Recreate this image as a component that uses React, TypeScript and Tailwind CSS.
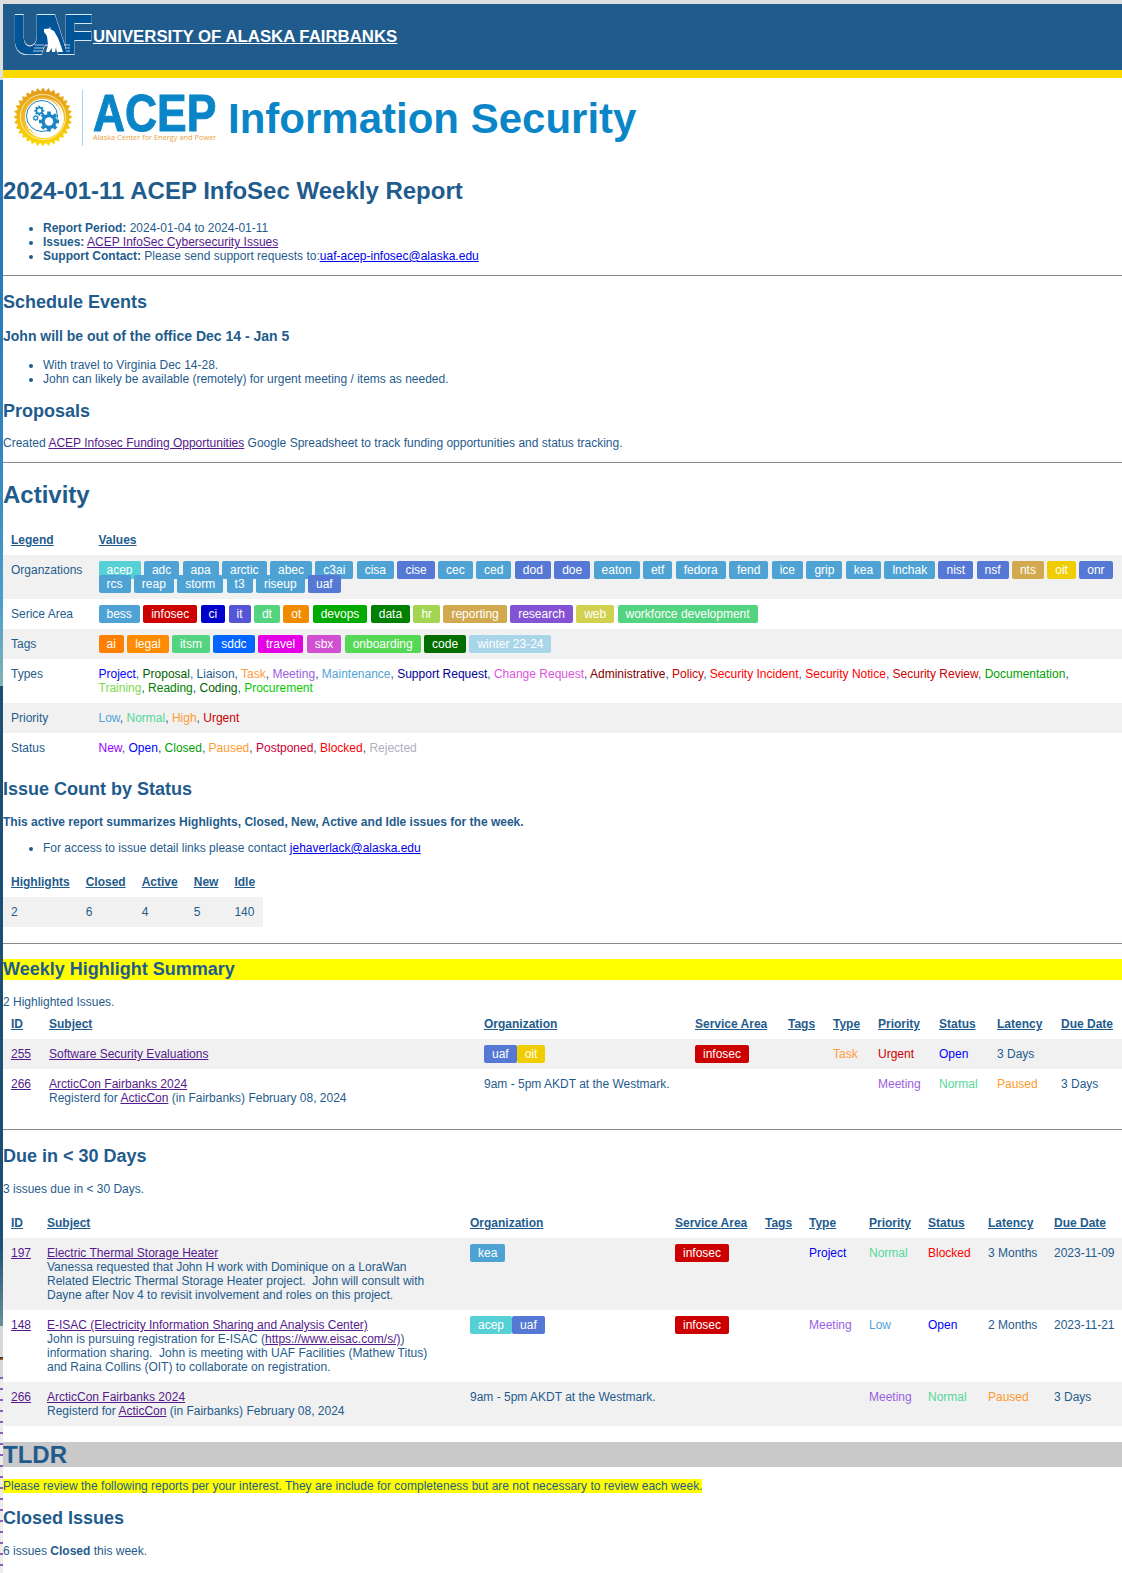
import type { ReactNode } from "react";

type Tag = [string, string];

const BLUE = "bg-[#4fa3d4]";
const INDIGO = "bg-[#5478d4]";

const orgs: Tag[] = [
  ["acep", "bg-[#55d0d5]"], ["adc", BLUE], ["apa", BLUE], ["arctic", BLUE], ["abec", BLUE], ["c3ai", BLUE],
  ["cisa", BLUE], ["cise", INDIGO], ["cec", BLUE], ["ced", BLUE], ["dod", INDIGO], ["doe", INDIGO],
  ["eaton", BLUE], ["etf", BLUE], ["fedora", BLUE], ["fend", BLUE], ["ice", BLUE], ["grip", BLUE],
  ["kea", BLUE], ["lnchak", BLUE], ["nist", INDIGO], ["nsf", INDIGO], ["nts", "bg-[#d1a94f]"],
  ["oit", "bg-[#f0cd00]"], ["onr", INDIGO], ["rcs", BLUE], ["reap", BLUE], ["storm", BLUE], ["t3", BLUE],
  ["riseup", BLUE], ["uaf", INDIGO],
];

const areas: Tag[] = [
  ["bess", BLUE], ["infosec", "bg-[#cc0000]"], ["ci", "bg-[#0000cc]"], ["it", "bg-[#5555d5]"],
  ["dt", "bg-[#55d480]"], ["ot", "bg-[#f08c00]"], ["devops", "bg-[#00aa00]"], ["data", "bg-[#008000]"],
  ["hr", "bg-[#a3d550]"], ["reporting", "bg-[#d1a94f]"], ["research", "bg-[#8453d4]"], ["web", "bg-[#d1d14f]"],
  ["workforce development", "bg-[#53d480]"],
];

const tags: Tag[] = [
  ["ai", "bg-[#ff8000]"], ["legal", "bg-[#ff8c00]"], ["itsm", "bg-[#53d480]"], ["sddc", "bg-[#0066ff]"],
  ["travel", "bg-[#e600e6]"], ["sbx", "bg-[#d14fd1]"], ["onboarding", "bg-[#55d955]"], ["code", "bg-[#006f00]"],
  ["winter 23-24", "bg-[#a9d5e8]"],
];

const types: Tag[] = [
  ["Project", "text-[#0000ff]"], ["Proposal", "text-[#006400]"], ["Liaison", ""], ["Task", "text-[#ff9a3d]"],
  ["Meeting", "text-[#9a5fe0]"], ["Maintenance", "text-[#51a3d6]"], ["Support Request", "text-[#000099]"],
  ["Change Request", "text-[#dd55dd]"], ["Administrative", "text-[#800000]"], ["Policy", "text-[#cc0000]"],
  ["Security Incident", "text-[#ff0000]"], ["Security Notice", "text-[#ff0000]"], ["Security Review", "text-[#cc0000]"],
  ["Documentation", "text-[#00a000]"], ["Training", "text-[#7fd94f]"], ["Reading", "text-[#008000]"],
  ["Coding", "text-[#006000]"], ["Procurement", "text-[#00cc00]"],
];

const priorities: Tag[] = [
  ["Low", "text-[#51a3d6]"], ["Normal", "text-[#55d999]"], ["High", "text-[#ff9a2e]"], ["Urgent", "text-[#cc0000]"],
];

const statuses: Tag[] = [
  ["New", "text-[#9900ff]"], ["Open", "text-[#0000ff]"], ["Closed", "text-[#00a000]"], ["Paused", "text-[#ff9a2e]"],
  ["Postponed", "text-[#cc0033]"], ["Blocked", "text-[#ff0000]"], ["Rejected", "text-[#b0b0c0]"],
];

const colorOf = (list: Tag[], name: string) => list.find((t) => t[0] === name)?.[1] ?? "";

function Badge({ name, list }: { name: string; list: Tag[] }) {
  return <span className={`rounded-[2px] px-2 py-[2px] text-white ${colorOf(list, name)}`}>{name}</span>;
}

function BadgeRow({ list }: { list: Tag[] }) {
  return (
    <>
      {list.map((t) => (
        <span key={t[0]}>
          <Badge name={t[0]} list={list} />{" "}
        </span>
      ))}
    </>
  );
}

function CommaList({ list }: { list: Tag[] }) {
  return (
    <>
      {list.map((t, i) => (
        <span key={t[0]}>
          <span className={t[1]}>{t[0]}</span>
          {i < list.length - 1 ? ", " : ""}
        </span>
      ))}
    </>
  );
}

function Visited({ children }: { children: ReactNode }) {
  return <a className="text-[#551a8b] underline">{children}</a>;
}

function Mail({ children }: { children: ReactNode }) {
  return <a className="text-[#0000ee] underline">{children}</a>;
}

function Rule({ className }: { className: string }) {
  return <hr className={`border-0 h-px bg-[#8c8c8c] ${className}`} />;
}

function H2({ children, className }: { children: ReactNode; className: string }) {
  return <h2 className={`text-[18px] leading-[21px] font-bold ${className}`}>{children}</h2>;
}

function Bullets({ children, className }: { children: ReactNode; className: string }) {
  return <ul className={`list-disc pl-[40px] ${className}`}>{children}</ul>;
}

function Th({ children }: { children?: ReactNode }) {
  return <th className="p-2 text-left font-bold underline align-top">{children}</th>;
}

function Td({ children }: { children?: ReactNode }) {
  return <td className="p-2 align-top whitespace-nowrap">{children}</td>;
}

function SubjectTd({ children }: { children: ReactNode }) {
  return (
    <td className="p-2 align-top">
      <div className="max-w-[395px]">{children}</div>
    </td>
  );
}

function LegendRow({ label, shaded, children }: { label: string; shaded?: boolean; children: ReactNode }) {
  return (
    <tr className={shaded ? "bg-[#f1f1f1]" : ""}>
      <td className="p-2 align-top">{label}</td>
      <td className="p-2 align-top">{children}</td>
    </tr>
  );
}

function Gear({ cx, cy, r }: { cx: number; cy: number; r: number }) {
  const teeth = [0, 45, 90, 135];
  return (
    <g>
      {teeth.map((d) => (
        <rect
          key={d}
          x={cx - r * 0.18}
          y={cy - r}
          width={r * 0.36}
          height={r * 2}
          fill="#1a86c4"
          transform={`rotate(${d} ${cx} ${cy})`}
        />
      ))}
      <circle cx={cx} cy={cy} r={r * 0.76} fill="#1a86c4" />
      <circle cx={cx} cy={cy} r={r * 0.42} fill="#ffffff" />
    </g>
  );
}

function Seal() {
  const points: string[] = [];
  for (let i = 0; i < 64; i++) {
    const r = i % 2 === 0 ? 29.5 : 26;
    const a = (i / 64) * Math.PI * 2;
    points.push(`${(30 + r * Math.cos(a)).toFixed(2)},${(30 + r * Math.sin(a)).toFixed(2)}`);
  }
  return (
    <svg width="60" height="60" viewBox="0 0 60 60" className="shrink-0">
      <defs>
        <linearGradient id="gold" x1="0" y1="0" x2="0" y2="1">
          <stop offset="0" stopColor="#e39a1e" />
          <stop offset="1" stopColor="#fbd900" />
        </linearGradient>
      </defs>
      <polygon points={points.join(" ")} fill="url(#gold)" />
      <circle cx="30" cy="30" r="22.5" fill="none" stroke="#ffffff" strokeWidth="0.7" />
      <circle cx="31" cy="31" r="20" fill="#ffffff" />
      <circle cx="29" cy="29" r="19" fill="#f0b93a" />
      <circle cx="30" cy="30" r="18" fill="#ffffff" />
      <circle cx="29" cy="29" r="15.5" fill="none" stroke="#1a86c4" strokeWidth="1" />
      <circle cx="29" cy="29" r="14" fill="#ffffff" />
      <Gear cx={36} cy={34.5} r={10} />
      <Gear cx={26.3} cy={23.7} r={5} />
      <Gear cx={22.7} cy={31} r={3} />
    </svg>
  );
}

function UafLogo() {
  return (
    <svg width="80" height="41" viewBox="0 0 80 41" className="shrink-0">
      <defs>
        <filter id="uafOutline" x="-5%" y="-5%" width="110%" height="110%">
          <feMorphology in="SourceAlpha" operator="dilate" radius="1.5" result="outer" />
          <feFlood floodColor="#d8e6f0" />
          <feComposite in2="outer" operator="in" result="outline" />
          <feMorphology in="SourceGraphic" operator="dilate" radius="0.8" result="thick" />
          <feMerge>
            <feMergeNode in="outline" />
            <feMergeNode in="thick" />
          </feMerge>
        </filter>
      </defs>
      <g transform="scale(0.9 1)">
        <text
          x="0 22 56"
          y="39"
          fontFamily="Liberation Sans, sans-serif"
          fontWeight="700"
          fontSize="53"
          fill="#055499"
          filter="url(#uafOutline)"
        >
          UAF
        </text>
      </g>
      <path
        d="M31 15l5-.5 5 2.500 4 7 3 8 2 6h-6l-1-5-1 5h-3v-4l-3 4h-3l2-7-1-9-3-4z"
        fill="#ffffff"
      />
      <path d="M22 31h9M21 34h10M20 37h10M51 31h6M52 34h5M53 37h4" stroke="#ffffff" strokeWidth="0.7" />
    </svg>
  );
}

function IssueHead() {
  return (
    <thead>
      <tr>
        <Th>ID</Th><Th>Subject</Th><Th>Organization</Th><Th>Service Area</Th><Th>Tags</Th>
        <Th>Type</Th><Th>Priority</Th><Th>Status</Th><Th>Latency</Th><Th>Due Date</Th>
      </tr>
    </thead>
  );
}

function ArcticRow({ shaded }: { shaded?: boolean }) {
  return (
    <tr className={shaded ? "bg-[#f1f1f1]" : ""}>
      <Td><Visited>266</Visited></Td>
      <SubjectTd>
        <Visited>ArcticCon Fairbanks 2024</Visited>
        <br />
        Registerd for <Visited>ActicCon</Visited> (in Fairbanks) February 08, 2024
      </SubjectTd>
      <Td>9am - 5pm AKDT at the Westmark.</Td>
      <Td />
      <Td />
      <Td />
      <Td><span className={colorOf(types, "Meeting")}>Meeting</span></Td>
      <Td><span className={colorOf(priorities, "Normal")}>Normal</span></Td>
      <Td><span className={colorOf(statuses, "Paused")}>Paused</span></Td>
      <Td>3 Days</Td>
    </tr>
  );
}

export default function App() {
  return (
    <div className="w-[1122px] h-[1573px] overflow-hidden flex flex-col bg-white font-['Liberation_Sans',Arial,sans-serif] text-[12px] leading-[14px] text-[#1f5c8d]">
      <div className="h-[4px] shrink-0 bg-[#dedede]" />
      <div className="flex flex-1 min-h-0">
        <div className="w-[3px] shrink-0 flex flex-col">
          <div className="h-[76px] bg-[#dedede]" />
          <div className="h-[606px] bg-[linear-gradient(180deg,#1b6fb5_0%,#2f86c0_60%,#4a9cc9_85%,#7fb5b8_100%)]" />
          <div className="h-[558px] bg-[#1b4f73]" />
          <div className="h-[82px] bg-[linear-gradient(180deg,#1b4f73_0%,#6a8f9a_100%)]" />
          <div className="h-[51px] bg-[linear-gradient(180deg,#d5dad5_0px,#d5dad5_31px,#222222_31px,#c86a2a_34px,#d5dad5_34px)]" />
          <div className="flex-1 bg-[repeating-linear-gradient(180deg,#8a5cc0_0px,#8a5cc0_2px,#ececec_2px,#ececec_11px)]" />
        </div>

        <div className="w-[1119px]">
          <header className="h-[74px] bg-[#1f5c8d] border-b-[8px] border-[#fad900] flex items-start pl-[10px] pt-[10px]">
            <UafLogo />
            <a className="text-white underline font-bold text-[16.8px] leading-[19px] mt-[13px]">UNIVERSITY OF ALASKA FAIRBANKS</a>
          </header>

          <div className="h-[83px] flex items-start pl-[10px] pt-[9px]">
            <Seal />
            <div className="w-px h-[56px] bg-[#a9d5ec] ml-[9px] mt-[3px]" />
            <div className="ml-[10px] flex flex-col w-[125px] shrink-0">
              <span className="text-[51px] leading-[52px] font-bold text-[#0a86c8] mt-[1px] origin-left scale-x-[0.87] [-webkit-text-stroke:1px_#0a86c8]">ACEP</span>
              <span className="text-[7.4px] leading-[9px] text-[#e8a33d] font-['Open_Sans',sans-serif] whitespace-nowrap -mt-[7px]">Alaska Center for Energy and Power</span>
            </div>
            <h1 className="ml-[10px] text-[42px] leading-[48px] font-bold text-[#0a86c8] whitespace-nowrap mt-[8px]">Information Security</h1>
          </div>

          <h1 className="mt-[16px] text-[24px] leading-[27px] font-bold">2024-01-11 ACEP InfoSec Weekly Report</h1>
          <Bullets className="mt-[17px]">
            <li><b>Report Period:</b> 2024-01-04 to 2024-01-11</li>
            <li><b>Issues:</b> <Visited>ACEP InfoSec Cybersecurity Issues</Visited></li>
            <li><b>Support Contact:</b> Please send support requests to:<Mail>uaf-acep-infosec@alaska.edu</Mail></li>
          </Bullets>
          <Rule className="mt-[12px]" />

          <H2 className="mt-[16px]">Schedule Events</H2>
          <h3 className="mt-[15px] text-[14px] leading-[16px] font-bold">John will be out of the office Dec 14 - Jan 5</h3>
          <Bullets className="mt-[14px]">
            <li>With travel to Virginia Dec 14-28.</li>
            <li>John can likely be available (remotely) for urgent meeting / items as needed.</li>
          </Bullets>
          <H2 className="mt-[15px]">Proposals</H2>
          <p className="mt-[14px]">Created <Visited>ACEP Infosec Funding Opportunities</Visited> Google Spreadsheet to track funding opportunities and status tracking.</p>
          <Rule className="mt-[12px]" />

          <h1 className="mt-[18px] text-[24px] leading-[27px] font-bold">Activity</h1>
          <table className="mt-[17px] w-full border-collapse table-fixed">
            <colgroup>
              <col className="w-[87.5px]" />
              <col />
            </colgroup>
            <thead>
              <tr>
                <Th>Legend</Th>
                <Th>Values</Th>
              </tr>
            </thead>
            <tbody>
              <LegendRow label="Organzations" shaded><BadgeRow list={orgs} /></LegendRow>
              <LegendRow label="Serice Area"><BadgeRow list={areas} /></LegendRow>
              <LegendRow label="Tags" shaded><BadgeRow list={tags} /></LegendRow>
              <LegendRow label="Types"><CommaList list={types} /></LegendRow>
              <LegendRow label="Priority" shaded><CommaList list={priorities} /></LegendRow>
              <LegendRow label="Status"><CommaList list={statuses} /></LegendRow>
            </tbody>
          </table>

          <H2 className="mt-[16px]">Issue Count by Status</H2>
          <p className="mt-[15px] font-bold">This active report summarizes Highlights, Closed, New, Active and Idle issues for the week.</p>
          <Bullets className="mt-[12px]">
            <li>For access to issue detail links please contact <Mail>jehaverlack@alaska.edu</Mail></li>
          </Bullets>
          <table className="mt-[12px] border-collapse">
            <thead>
              <tr><Th>Highlights</Th><Th>Closed</Th><Th>Active</Th><Th>New</Th><Th>Idle</Th></tr>
            </thead>
            <tbody>
              <tr className="bg-[#f1f1f1]"><Td>2</Td><Td>6</Td><Td>4</Td><Td>5</Td><Td>140</Td></tr>
            </tbody>
          </table>
          <Rule className="mt-[16px]" />

          <H2 className="mt-[15px] bg-[#ffff00]">Weekly Highlight Summary</H2>
          <p className="mt-[15px]">2 Highlighted Issues.</p>
          <table className="w-full border-collapse table-fixed">
            <colgroup>
              <col className="w-[38px]" />
              <col className="w-[435px]" />
              <col className="w-[211px]" />
              <col className="w-[93px]" />
              <col className="w-[45px]" />
              <col className="w-[45px]" />
              <col className="w-[61px]" />
              <col className="w-[58px]" />
              <col className="w-[64px]" />
              <col />
            </colgroup>
            <IssueHead />
            <tbody>
              <tr className="bg-[#f1f1f1]">
                <Td><Visited>255</Visited></Td>
                <SubjectTd><Visited>Software Security Evaluations</Visited></SubjectTd>
                <Td><Badge name="uaf" list={orgs} /><Badge name="oit" list={orgs} /></Td>
                <Td><Badge name="infosec" list={areas} /></Td>
                <Td />
                <Td><span className={colorOf(types, "Task")}>Task</span></Td>
                <Td><span className={colorOf(priorities, "Urgent")}>Urgent</span></Td>
                <Td><span className={colorOf(statuses, "Open")}>Open</span></Td>
                <Td>3 Days</Td>
                <Td />
              </tr>
              <ArcticRow />
            </tbody>
          </table>
          <Rule className="mt-[16px]" />

          <H2 className="mt-[16px]">Due in &lt; 30 Days</H2>
          <p className="mt-[15px]">3 issues due in &lt; 30 Days.</p>
          <table className="mt-[12px] w-full border-collapse table-fixed">
            <colgroup>
              <col className="w-[36px]" />
              <col className="w-[423px]" />
              <col className="w-[205px]" />
              <col className="w-[90px]" />
              <col className="w-[44px]" />
              <col className="w-[60px]" />
              <col className="w-[59px]" />
              <col className="w-[60px]" />
              <col className="w-[66px]" />
              <col />
            </colgroup>
            <IssueHead />
            <tbody>
              <tr className="bg-[#f1f1f1]">
                <Td><Visited>197</Visited></Td>
                <SubjectTd>
                  <Visited>Electric Thermal Storage Heater</Visited>
                  <br />
                  Vanessa requested that John H work with Dominique on a LoraWan Related Electric Thermal Storage Heater project.&nbsp; John will consult with Dayne after Nov 4 to revisit involvement and roles on this project.
                </SubjectTd>
                <Td><Badge name="kea" list={orgs} /></Td>
                <Td><Badge name="infosec" list={areas} /></Td>
                <Td />
                <Td><span className={colorOf(types, "Project")}>Project</span></Td>
                <Td><span className={colorOf(priorities, "Normal")}>Normal</span></Td>
                <Td><span className={colorOf(statuses, "Blocked")}>Blocked</span></Td>
                <Td>3 Months</Td>
                <Td>2023-11-09</Td>
              </tr>
              <tr>
                <Td><Visited>148</Visited></Td>
                <SubjectTd>
                  <Visited>E-ISAC (Electricity Information Sharing and Analysis Center)</Visited>
                  <br />
                  John is pursuing registration for E-ISAC (<Visited>https://www.eisac.com/s/)</Visited>) information sharing.&nbsp; John is meeting with UAF Facilities (Mathew Titus) and Raina Collins (OIT) to collaborate on registration.
                </SubjectTd>
                <Td><Badge name="acep" list={orgs} /><Badge name="uaf" list={orgs} /></Td>
                <Td><Badge name="infosec" list={areas} /></Td>
                <Td />
                <Td><span className={colorOf(types, "Meeting")}>Meeting</span></Td>
                <Td><span className={colorOf(priorities, "Low")}>Low</span></Td>
                <Td><span className={colorOf(statuses, "Open")}>Open</span></Td>
                <Td>2 Months</Td>
                <Td>2023-11-21</Td>
              </tr>
              <ArcticRow shaded />
            </tbody>
          </table>

          <h1 className="mt-[16px] pt-[1px] text-[24px] leading-[24px] font-bold bg-[#c9c9c9]">TLDR</h1>
          <p className="mt-[12px]"><span className="bg-[#ffff00]">Please review the following reports per your interest. They are include for completeness but are not necessary to review each week.</span></p>
          <H2 className="mt-[15px]">Closed Issues</H2>
          <p className="mt-[15px]">6 issues <b>Closed</b> this week.</p>
        </div>
      </div>
    </div>
  );
}
